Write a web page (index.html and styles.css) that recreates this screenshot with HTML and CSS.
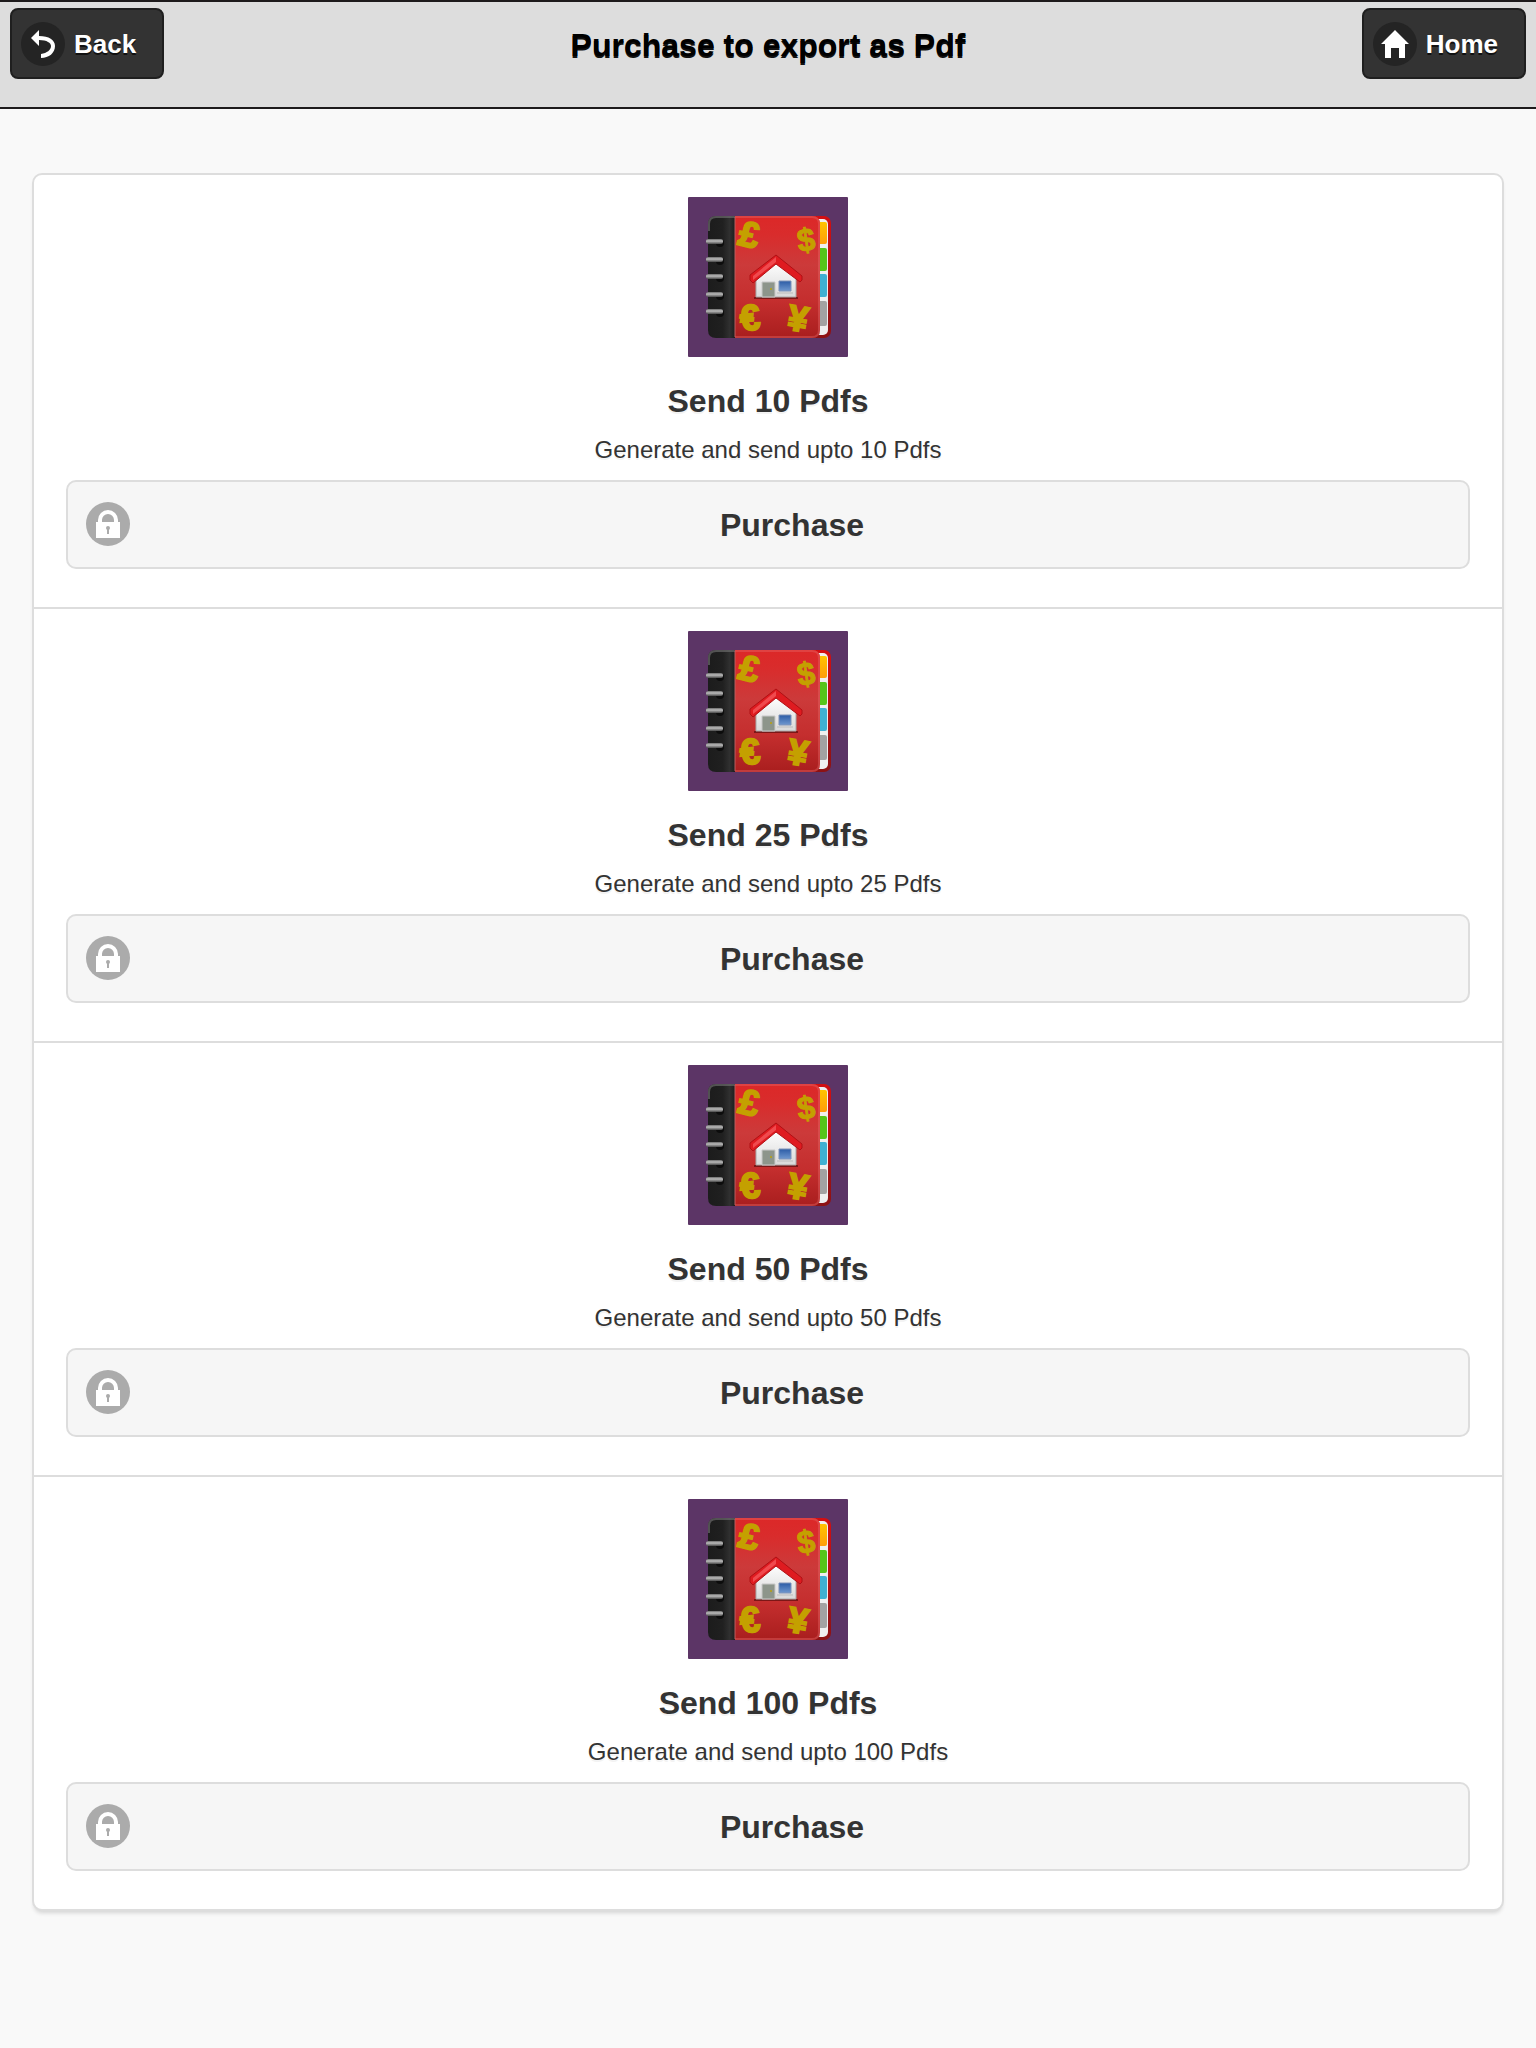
FILE: index.html
```html
<!DOCTYPE html>
<html lang="en">
<head>
    <meta charset="UTF-8">
    <meta name="viewport" content="width=device-width, initial-scale=1.0">
    <title>Purchase to export as Pdf</title>
    <link rel="stylesheet" href="styles.css">
</head>
<body>
    <header class="header">
        <a class="nav-button nav-back" href="#back">
            <svg class="icon" viewBox="0 0 44 44" aria-hidden="true">
                <circle cx="22" cy="22" r="22" fill="#242424"/>
                <path d="M10 16l8-8v6c10 0 16 4 16 10 0 7-6 12-14 12v-4c6-1 10-4 10-8 0-3-4-6-12-6v6z" fill="#fff"/>
            </svg>
            <span class="nav-text">Back</span>
        </a>
        <h1 class="title">Purchase to export as Pdf</h1>
        <a class="nav-button nav-home" href="#home">
            <svg class="icon" viewBox="0 0 44 44" aria-hidden="true">
                <circle cx="22" cy="22" r="22" fill="#242424"/>
                <path d="M22 8l14 14h-4v14h-6V26h-8v10h-6V22H8z" fill="#fff"/>
            </svg>
            <span class="nav-text">Home</span>
        </a>
    </header>

    <main class="content">
        <ul class="packages">
            <li class="package">
                <!-- The book and the lock are drawn here once, the other rows reuse them -->
                <svg class="book" viewBox="0 0 160 160" aria-hidden="true">
                    <defs>
                        <linearGradient id="cover" x1="0" y1="0" x2="0" y2="1">
                            <stop offset="0" stop-color="#dc2828"/>
                            <stop offset="0.15" stop-color="#d92c2c"/>
                            <stop offset="0.4" stop-color="#cc3a3a"/>
                            <stop offset="0.7" stop-color="#c42e2e"/>
                            <stop offset="1" stop-color="#a91e1e"/>
                        </linearGradient>
                        <linearGradient id="spine" x1="0" y1="0" x2="1" y2="0">
                            <stop offset="0" stop-color="#1c1c1c"/>
                            <stop offset="0.55" stop-color="#202020"/>
                            <stop offset="0.8" stop-color="#303030"/>
                            <stop offset="1" stop-color="#1d1d1d"/>
                        </linearGradient>
                        <linearGradient id="ring" x1="0" y1="0" x2="0" y2="1">
                            <stop offset="0" stop-color="#6a6a6a"/>
                            <stop offset="0.4" stop-color="#bdbdbd"/>
                            <stop offset="1" stop-color="#4a4a4a"/>
                        </linearGradient>
                        <linearGradient id="edge" x1="0" y1="0" x2="0" y2="1">
                            <stop offset="0" stop-color="#d30f12"/>
                            <stop offset="1" stop-color="#8c1214"/>
                        </linearGradient>
                        <linearGradient id="orange" x1="0" y1="0" x2="0" y2="1">
                            <stop offset="0" stop-color="#ffc400"/>
                            <stop offset="1" stop-color="#ff9d0a"/>
                        </linearGradient>
                        <linearGradient id="wall" x1="0" y1="0" x2="0" y2="1">
                            <stop offset="0" stop-color="#fff"/>
                            <stop offset="1" stop-color="#d9d9d9"/>
                        </linearGradient>
                        <linearGradient id="glass" x1="0" y1="0" x2="0" y2="1">
                            <stop offset="0" stop-color="#2c5ca6"/>
                            <stop offset="1" stop-color="#6f98cf"/>
                        </linearGradient>
                    </defs>
                    <g id="book-art">
                        <rect width="160" height="160" rx="1" fill="#5c3566"/>
                        <!-- back cover and index tabs -->
                        <rect x="110" y="19" width="33" height="122" rx="7" fill="url(#edge)"/>
                        <rect x="110" y="22" width="30" height="116" rx="5" fill="#efefef"/>
                        <rect x="124" y="25" width="15" height="22" rx="2" fill="url(#orange)"/>
                        <rect x="124" y="51" width="15" height="23" rx="2" fill="#55c51b"/>
                        <rect x="124" y="77" width="15" height="23" rx="2" fill="#3fb0d2"/>
                        <rect x="124" y="104" width="15" height="25" rx="2" fill="#a2a2a2"/>
                        <!-- front cover -->
                        <path d="M47 19h77q8 0 8 8v106q0 8-8 8H47z" fill="url(#cover)"/>
                        <path d="M47 20h77q7 0 7 7v106q0 7-7 7H47" fill="none" stroke="#e56a6a" stroke-opacity="0.4" stroke-width="2"/>
                        <path d="M28 19h19v122H28q-8 0-8-8V27q0-8 8-8z" fill="url(#spine)"/>
                        <path d="M21 34v-7q0-7 7-7h19" fill="none" stroke="#777" stroke-opacity="0.6" stroke-width="2"/>
                        <path d="M47 20v120" stroke="#b96060"/>
                        <!-- binder rings -->
                        <g fill="#0c0c0c">
                            <circle cx="32" cy="46" r="4"/>
                            <circle cx="32" cy="64" r="4"/>
                            <circle cx="32" cy="81" r="4"/>
                            <circle cx="32" cy="99" r="4"/>
                            <circle cx="32" cy="116" r="4"/>
                        </g>
                        <g fill="url(#ring)">
                            <rect x="18" y="42" width="17" height="5" rx="2"/>
                            <rect x="18" y="60" width="17" height="5" rx="2"/>
                            <rect x="18" y="77" width="17" height="5" rx="2"/>
                            <rect x="18" y="95" width="17" height="5" rx="2"/>
                            <rect x="18" y="112" width="17" height="5" rx="2"/>
                        </g>
                        <!-- currency signs -->
                        <g class="currency">
                            <text x="61" y="50" transform="rotate(14 61 38)">£</text>
                            <text class="dollar" x="118" y="54" transform="rotate(-8 118 42)">$</text>
                            <text x="62" y="133" transform="rotate(-6 61 121)">€</text>
                            <text x="110" y="134" transform="rotate(10 110 121)">¥</text>
                        </g>
                        <!-- house -->
                        <path d="M66 101h44" stroke="#7c1717" stroke-width="2"/>
                        <path d="M68 81l20-16 20 16v19H68z" fill="url(#wall)" stroke="#a8a8a8"/>
                        <path d="M74 85h13v15H74z" fill="#8d958b" stroke="#c9c9c9"/>
                        <circle cx="83" cy="92" r="1" fill="#b8a20c"/>
                        <path d="M91 84h12v10H91z" fill="url(#glass)" stroke="#7f93b8"/>
                        <path d="M89 96h16" stroke="#bbb"/>
                        <path d="M88 58l26 21v4l-2 2-24-18-23 19-3-3v-5z" fill="#df1b20" stroke="#b01014"/>
                        <path d="M88 60L65 79v4l23-18z" fill="#f04a4e"/>
                    </g>
                </svg>
                <h2 class="name">Send 10 Pdfs</h2>
                <p class="description">Generate and send upto 10 Pdfs</p>
                <button class="purchase" type="button">
                    <svg class="icon" viewBox="0 0 44 44" aria-hidden="true">
                        <g id="lock-art">
                            <circle cx="22" cy="22" r="22" fill="#ababab"/>
                            <path d="M14 21v-3a8 8 0 0 1 16 0v3" fill="none" stroke="#fff" stroke-width="4"/>
                            <path d="M10 20h24v16H10z" fill="#fff"/>
                            <circle cx="22" cy="26" r="2" fill="#ababab"/>
                            <path d="M21 26h2v6h-2z" fill="#ababab"/>
                        </g>
                    </svg>
                    <span class="label">Purchase</span>
                </button>
            </li>
            <li class="package">
                <svg class="book" viewBox="0 0 160 160" aria-hidden="true"><use href="#book-art"/></svg>
                <h2 class="name">Send 25 Pdfs</h2>
                <p class="description">Generate and send upto 25 Pdfs</p>
                <button class="purchase" type="button">
                    <svg class="icon" viewBox="0 0 44 44" aria-hidden="true"><use href="#lock-art"/></svg>
                    <span class="label">Purchase</span>
                </button>
            </li>
            <li class="package">
                <svg class="book" viewBox="0 0 160 160" aria-hidden="true"><use href="#book-art"/></svg>
                <h2 class="name">Send 50 Pdfs</h2>
                <p class="description">Generate and send upto 50 Pdfs</p>
                <button class="purchase" type="button">
                    <svg class="icon" viewBox="0 0 44 44" aria-hidden="true"><use href="#lock-art"/></svg>
                    <span class="label">Purchase</span>
                </button>
            </li>
            <li class="package">
                <svg class="book" viewBox="0 0 160 160" aria-hidden="true"><use href="#book-art"/></svg>
                <h2 class="name">Send 100 Pdfs</h2>
                <p class="description">Generate and send upto 100 Pdfs</p>
                <button class="purchase" type="button">
                    <svg class="icon" viewBox="0 0 44 44" aria-hidden="true"><use href="#lock-art"/></svg>
                    <span class="label">Purchase</span>
                </button>
            </li>
        </ul>
    </main>
</body>
</html>
```
FILE: styles.css
```css
* {
    box-sizing: border-box;
}

body {
    margin: 0;
    background: #f9f9f9;
    color: #333;
    font-family: "Liberation Sans", Helvetica, Arial, sans-serif;
}

.icon {
    flex: none;
    width: 44px;
    height: 44px;
}

/* Header bar */
.header {
    display: grid;
    grid-template-columns: 1fr auto 1fr;
    align-items: start;
    padding: 6px 10px 28px;
    background: #ddd;
    border-top: 2px solid #1d1a1b;
    border-bottom: 2px solid #1d1a1b;
}

.title {
    margin: 16px 0 0;
    color: #000;
    font-size: 32px;
    line-height: 42px;
    text-align: center;
    text-shadow: 0 2px 0 #111;
}

.nav-button {
    display: flex;
    align-items: center;
    gap: 9px;
    padding: 12px 26px 11px 9px;
    background: #333;
    border: 2px solid #1f1f1f;
    border-radius: 8px;
    color: #fff;
    font-size: 26px;
    font-weight: bold;
    text-decoration: none;
    text-shadow: 0 2px 0 #111;
}

.nav-text {
    line-height: 32px;
}

.nav-back {
    justify-self: start;
}

.nav-home {
    justify-self: end;
}

.nav-button:hover {
    background: #444;
}

/* Package list */
.content {
    padding: 64px 32px;
}

.packages {
    margin: 0;
    padding: 0;
    list-style: none;
    background: #fff;
    border: 2px solid #ddd;
    border-radius: 10px;
    box-shadow: 0 4px 4px -2px rgba(0, 0, 0, 0.15);
}

.package {
    display: flex;
    flex-direction: column;
    align-items: center;
    padding: 22px 32px 38px;
}

.package + .package {
    border-top: 2px solid #ddd;
}

.book {
    width: 160px;
    height: 160px;
}

.currency {
    fill: #c4a000;
    stroke: #c4a000;
    stroke-width: 2px;
    font-size: 36px;
    font-weight: bold;
    text-anchor: middle;
}

.dollar {
    font-size: 32px;
    stroke-width: 1px;
}

.name {
    margin: 23px 0 0;
    font-size: 32px;
    line-height: 42px;
    text-shadow: 0 2px 0 #f3f3f3;
}

.description {
    margin: 12px 0 14px;
    font-size: 24px;
    line-height: 32px;
    text-shadow: 0 2px 0 #f3f3f3;
}

.purchase {
    display: flex;
    align-items: center;
    gap: 18px;
    width: 100%;
    padding: 20px 32px 21px 18px;
    background: #f6f6f6;
    border: 2px solid #ddd;
    border-radius: 10px;
    color: #333;
    font-family: inherit;
    font-size: 32px;
    font-weight: bold;
    text-shadow: 0 2px 0 #f3f3f3;
    cursor: pointer;
}

.purchase:hover {
    background: #ededed;
}

.label {
    flex: 1;
    padding-top: 2px;
    line-height: 40px;
    text-align: center;
}
```
